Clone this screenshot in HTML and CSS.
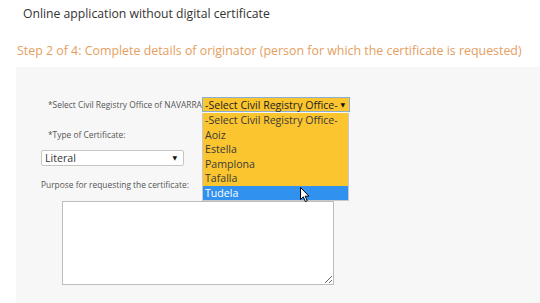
FILE: index.html
```html
<!DOCTYPE html>
<html lang="en">
  <head>
    <meta charset="UTF-8" />
    <title>Online application without digital certificate</title>
    <link rel="stylesheet" href="styles.css">
  </head>
  <body>
    <header class="intro">
      <h1 class="title">Online application without digital certificate</h1>
      <h2 class="step">Step 2 of 4: Complete details of originator (person for which the certificate is requested)</h2>
    </header>

    <main class="panel">
      <form class="cert-form">
        <div class="row row-office">
          <label class="label label-office">*Select Civil Registry Office of NAVARRA:</label>
          <div class="combo">
            <div class="combo-box">
              <span>-Select Civil Registry Office-</span>
              <span class="arrow">&#9660;</span>
            </div>
            <ul class="combo-list">
              <li>-Select Civil Registry Office-</li>
              <li>Aoiz</li>
              <li>Estella</li>
              <li>Pamplona</li>
              <li>Tafalla</li>
              <li class="active">Tudela</li>
            </ul>
            <svg class="pointer" width="10" height="16" viewBox="0 0 10 16">
              <path d="M0.5 0.5 L0.5 12.5 L3.3 9.8 L5.3 14.6 L7.2 13.8 L5.2 9.2 L9 9.2 Z" fill="#fff" stroke="#000" stroke-width="1" stroke-linejoin="round" />
            </svg>
          </div>
        </div>

        <label class="label label-type">*Type of Certificate:</label>
        <div class="select-plain">
          <span>Literal</span>
          <span class="arrow">&#9660;</span>
        </div>

        <label class="label label-purpose">Purpose for requesting the certificate:</label>
        <textarea class="purpose"></textarea>
      </form>
    </main>
  </body>
</html>
```

FILE: styles.css
```css
body {
  margin: 0;
  font-family: "Open Sans", "DejaVu Sans", sans-serif;
  background-color: #fff;
  color: #333;
  overflow: hidden;
}
.intro {
  padding: 5px 0 0 17px;
}
.title {
  margin: 0 0 0 6px;
  font-size: 12.2px;
  font-weight: normal;
  line-height: 18px;
  color: #333;
}
.step {
  margin: 19px 0 0;
  font-size: 12.4px;
  font-weight: normal;
  line-height: 18px;
  color: #e59e5e;
  white-space: nowrap;
}
.panel {
  margin: 7px 0 0 16px;
  height: 236px;
  padding-top: 30px;
  box-sizing: border-box;
  background-color: #f7f7f7;
}
.cert-form {
  display: flex;
  flex-direction: column;
  align-items: flex-start;
}
.row {
  display: flex;
  align-items: center;
}
.row-office {
  margin-left: 32px;
  height: 15px;
}
.label {
  font-size: 8.4px;
  line-height: 12px;
  color: #555;
  white-space: nowrap;
}
.label-office {
  width: 154px;
  overflow: hidden;
}
.label-type {
  margin: 17px 0 0 32px;
}
.label-purpose {
  margin: 13px 0 0 25px;
}
.combo {
  position: relative;
}
.combo-box {
  width: 148px;
  height: 15px;
  box-sizing: border-box;
  padding: 0 4px 0 2px;
  display: flex;
  align-items: center;
  justify-content: space-between;
  background-color: #fbc52f;
  border: 1px solid #8aaed3;
  font-size: 10.6px;
  color: #222;
  white-space: nowrap;
}
.arrow {
  font-size: 6px;
  color: #111;
}
.combo-list {
  position: absolute;
  top: 16px;
  left: 0;
  width: 147px;
  margin: 0;
  padding: 0;
  list-style: none;
  background-color: #fbc52f;
  border: 1px solid #c9c9c9;
  border-top: none;
  box-sizing: border-box;
  z-index: 2;
}
.combo-list li {
  height: 14.5px;
  line-height: 14.5px;
  padding-left: 2px;
  font-size: 10.6px;
  color: #3a3a3a;
  white-space: nowrap;
}
.combo-list li.active {
  background-color: #3092ee;
  color: #fff;
}
.pointer {
  position: absolute;
  left: 98px;
  top: 90px;
  z-index: 3;
}
.select-plain {
  margin: 9px 0 0 25px;
  width: 143px;
  height: 16px;
  box-sizing: border-box;
  padding: 0 6px 0 3px;
  display: flex;
  align-items: center;
  justify-content: space-between;
  background-color: #fff;
  border: 1px solid #c6c6c6;
  border-radius: 2px;
  font-size: 10.6px;
  color: #333;
}
.purpose {
  margin: 10px 0 0 46px;
  width: 272px;
  height: 84px;
  box-sizing: border-box;
  border: 1px solid #bdbdbd;
  background-color: #fff;
  resize: both;
  font-family: inherit;
}
```
